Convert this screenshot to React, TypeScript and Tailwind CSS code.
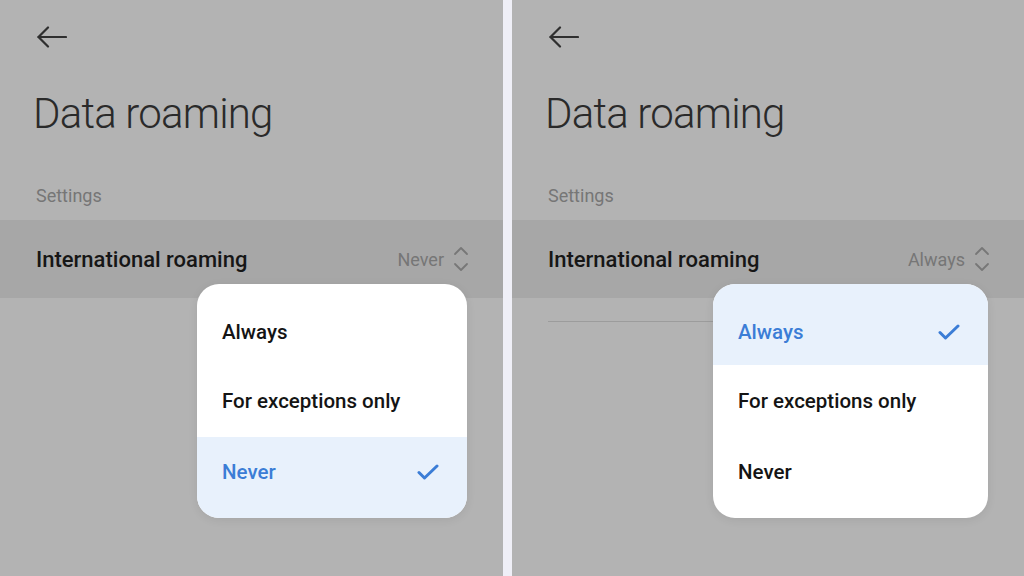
import React from 'react';

const options = ['Always', 'For exceptions only', 'Never'];

function BackArrow() {
  return (
    <svg width="30" height="22" viewBox="0 0 30 22" fill="none" stroke="#2f2f2f" strokeWidth="2.2" strokeLinecap="round" strokeLinejoin="round">
      <path d="M1.5 11H29" />
      <path d="M11 1.5L1.5 11l9.5 9.5" />
    </svg>
  );
}

function UpDown() {
  return (
    <svg width="16" height="26" viewBox="0 0 16 26" fill="none" stroke="#777" strokeWidth="1.8" strokeLinecap="round" strokeLinejoin="round">
      <path d="M2 8l6-6 6 6" />
      <path d="M2 18l6 6 6-6" />
    </svg>
  );
}

function Check() {
  return (
    <svg width="22" height="16" viewBox="0 0 22 16" fill="none" stroke="#3b7dd6" strokeWidth="3" strokeLinecap="round" strokeLinejoin="round">
      <path d="M2 8.5l5.5 5.5L20 2" />
    </svg>
  );
}

// row heights inside the dropdown: top and bottom rows carry the rounded padding
const rowCls = ['h-[81px] pt-[15px]', 'h-[72px]', 'h-[81px] pb-[11px]'];

function Panel({ value, menuWidth, line }: { value: string; menuWidth: string; line?: boolean }) {
  return (
    <div className="relative flex-1 flex flex-col bg-[#b3b3b3] h-full">
      <div className="pl-[37px] pt-[26px]">
        <BackArrow />
      </div>
      <h1 className="pl-[33px] mt-[40px] text-[42px] leading-[52px] font-light text-[#2a2a2a] tracking-[-0.8px]">
        Data roaming
      </h1>
      <div className="pl-[36px] mt-[44px] text-[18px] leading-[24px] text-[#767676]">Settings</div>
      <div className="mt-[12px] h-[78px] bg-[#a7a7a7] flex items-center justify-between pl-[36px] pr-[34px]">
        <span className="text-[22px] font-medium text-[#161616]">International roaming</span>
        <span className="flex items-center gap-[9px] text-[18px] text-[#767676]">
          {value}
          <UpDown />
        </span>
      </div>
      {line && <div className="ml-[36px] mt-[23px] h-px w-[200px] bg-[#9c9c9c]" />}

      <div className={`absolute top-[284px] right-[36px] ${menuWidth} rounded-[22px] bg-white overflow-hidden shadow-[0_2px_10px_rgba(0,0,0,0.08)]`}>
        {options.map((o, i) => {
          const on = o === value;
          return (
            <div
              key={o}
              className={`${rowCls[i]} flex items-center justify-between pl-[25px] pr-[28px] text-[20.5px] font-medium ${
                on ? 'bg-[#e8f1fc] text-[#3b7dd6]' : 'text-[#141414]'
              }`}
            >
              <span>{o}</span>
              {on && <Check />}
            </div>
          );
        })}
      </div>
    </div>
  );
}

export default function App() {
  return (
    <div className="w-[1024px] h-[576px] flex overflow-hidden font-['Roboto',sans-serif]">
      <div className="w-[503px] h-full flex">
        <Panel value="Never" menuWidth="w-[270px]" />
      </div>
      <div className="w-[9px] h-full bg-[#efeff7]" />
      <div className="w-[512px] h-full flex">
        <Panel value="Always" menuWidth="w-[275px]" line />
      </div>
    </div>
  );
}
